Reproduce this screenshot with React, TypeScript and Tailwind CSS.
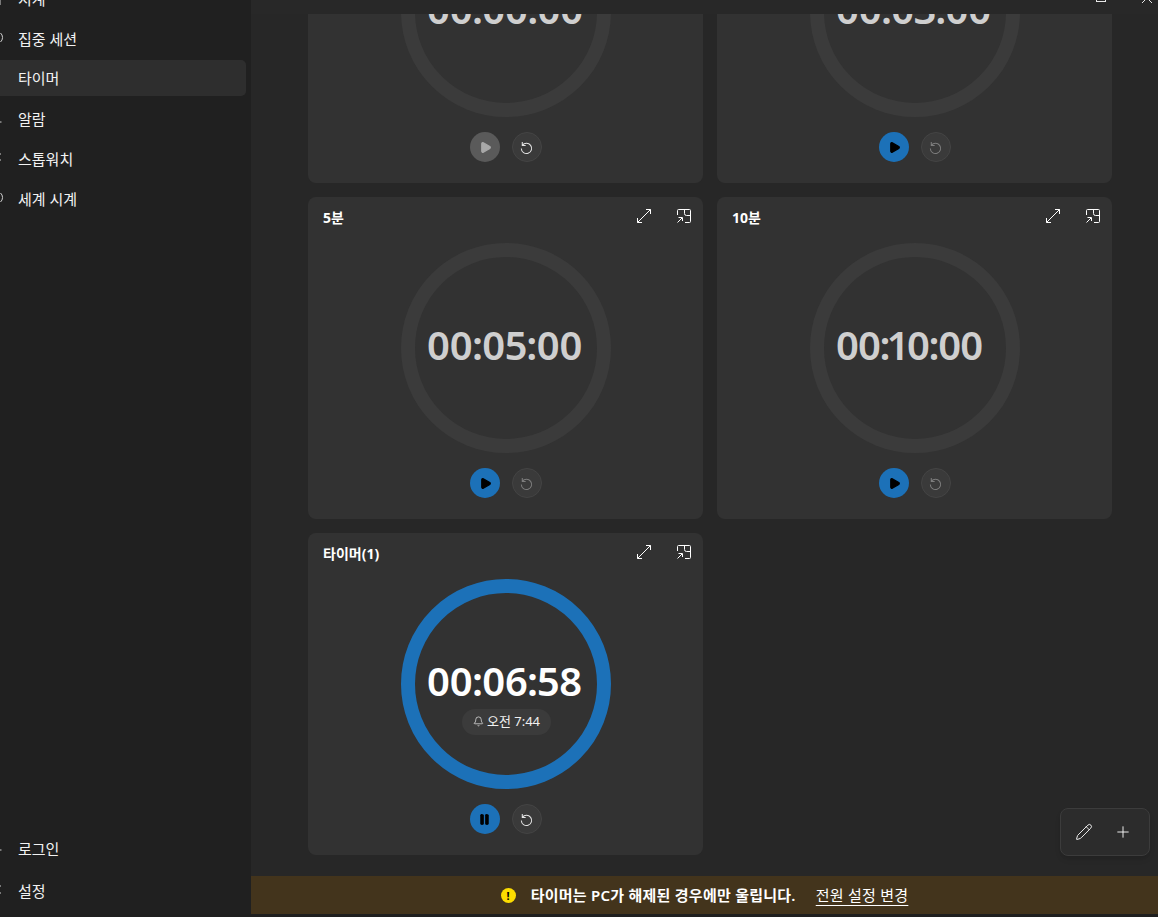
import { Bell, Pause, Pencil, Play, Plus } from "lucide-react";

const font = "font-['Noto_Sans','Noto_Sans_CJK_KR',sans-serif]";

function ExpandIcon() {
  return (
    <svg width="16" height="16" viewBox="0 0 16 16" fill="none" stroke="#ffffff" strokeWidth="1">
      <path d="M1.5 10v4.5H6M14.5 6V1.5H10M1.5 14.5l13-13" />
    </svg>
  );
}

function MiniIcon() {
  return (
    <svg width="16" height="16" viewBox="0 0 16 16" fill="none" stroke="#ffffff" strokeWidth="1">
      <path d="M1.5 7V2.5a1 1 0 0 1 1-1h11a1 1 0 0 1 1 1v11a1 1 0 0 1-1 1H9M8.5 1.5v4a2 2 0 0 0 2 2h4M1.5 14.5 6 10M2.5 9.5H6.5V13" />
    </svg>
  );
}

function ResetIcon({ className }: { className: string }) {
  return (
    <svg className={className} width="15" height="15" viewBox="0 0 16 16" fill="none" stroke="currentColor" strokeWidth="1.1">
      <path d="M3.5 2v3.8h3.6M3.5 5.8A5.5 5.5 0 1 1 2.5 9" />
    </svg>
  );
}

function TimerCard({
  title,
  time,
  state,
  narrow,
}: {
  title: string;
  time: string;
  state: "idle" | "running" | "paused";
  narrow?: boolean;
}) {
  const running = state === "running";
  const paused = state === "paused";
  return (
    <div className="relative h-[322px] rounded-lg bg-[#323232] flex flex-col items-center">
      <div className="w-full h-[46px] pl-[15px] pr-[11px] flex justify-between">
        <span className="mt-[11px] text-[14px] leading-[20px] font-bold text-white">{title}</span>
        <div className="mt-[11px] flex gap-[24px] h-[16px]">
          <ExpandIcon />
          <MiniIcon />
        </div>
      </div>
      <div
        className={`w-[210px] h-[210px] shrink-0 rounded-full border-[14px] flex flex-col items-center justify-center ${
          running ? "border-[#1c71b8]" : "border-[#3b3b3b]"
        }`}
      >
        <div
          className={`w-[153px] -ml-[5px] text-[40px] leading-[50px] font-semibold whitespace-nowrap proportional-nums ${
            narrow ? "tracking-[-1.8px]" : "tracking-[-1.15px]"
          } ${running ? "text-white mt-[22px]" : "text-[#cfcfcf] mb-[6px]"}`}
        >
          {time}
        </div>
        {running && (
          <div className="mt-[3px] ml-[2px] h-[26px] w-[89px] rounded-full bg-[#3b3b3b] flex items-center justify-center gap-[3px] text-[13px] text-[#f0f0f0]">
            <Bell size={11} strokeWidth={1.5} />
            <span>오전 7:44</span>
          </div>
        )}
      </div>
      <div className="mt-[15px] flex gap-[12px]">
        <div
          className={`w-[30px] h-[30px] rounded-full flex items-center justify-center ${
            paused ? "bg-[#5a5a5a]" : "bg-[#1c71b8]"
          }`}
        >
          {running ? (
            <Pause size={13} fill="#000" stroke="#000" strokeWidth={1.5} />
          ) : (
            <Play
              size={13}
              className="ml-[1px]"
              fill={paused ? "#a8a8a8" : "#000"}
              stroke={paused ? "#a8a8a8" : "#000"}
            />
          )}
        </div>
        <div className="w-[30px] h-[30px] rounded-full bg-[#3a3a3a] border border-[#444444] flex items-center justify-center">
          <ResetIcon className={running || paused ? "text-[#e4e4e4]" : "text-[#7d7d7d]"} />
        </div>
      </div>
    </div>
  );
}

// the nav icons are nearly all cut off by the left edge of the window
function NavItem({ label, active, edge }: { label: string; active?: boolean; edge?: string }) {
  return (
    <div
      className={`relative h-[36px] mb-[4px] w-[246px] rounded-r-[5px] pl-[18px] flex items-center text-[15px] text-[#f2f2f2] ${
        active ? "bg-[#2e2e2e]" : "pt-[2px]"
      }`}
    >
      {edge && (
        <svg className="absolute left-0 top-[11px]" width="4" height="14" viewBox="0 0 4 14" fill="none" stroke="#cfcfcf">
          <path d={edge} />
        </svg>
      )}
      {label}
    </div>
  );
}

export default function App() {
  return (
    <div className={`w-[1158px] h-[917px] overflow-hidden flex flex-col bg-[#1f1f1f] ${font}`}>
      <div className="flex h-[914px]">
        <aside className="w-[251px] shrink-0 bg-[#202020] flex flex-col justify-between">
          <div className="-mt-[20px]">
            <NavItem label="시계" edge="M0 7v7" />
            <NavItem label="집중 세션" edge="M0.5 2A6 6 0 0 1 0.5 11" />
            <NavItem label="타이머" active />
            <NavItem label="알람" edge="M0 11h1.5" />
            <NavItem label="스톱워치" edge="M0 3h1M0 9h1" />
            <NavItem label="세계 시계" edge="M0.5 2A6 6 0 0 1 0.5 11" />
          </div>
          <div className="pb-[2px]">
            <div className="mb-[6px]">
              <NavItem label="로그인" edge="M0 9h1.5" />
            </div>
            <NavItem label="설정" edge="M0 3h1M0 10h1" />
          </div>
        </aside>

        <main className="relative flex-1 min-w-0 flex flex-col bg-[#272727]">
          {/* title bar, window buttons are cut off at the top */}
          <div className="relative z-10 h-[14px] shrink-0 bg-[#282828] overflow-hidden">
            <div className="absolute right-[52px] -top-[8px] w-[10px] h-[10px] border border-[#e8e8e8]" />
            <svg
              className="absolute right-[6px] -top-[7px]"
              width="10"
              height="10"
              viewBox="0 0 10 10"
              stroke="#e8e8e8"
            >
              <path d="M0 0l10 10M10 0L0 10" />
            </svg>
          </div>

          <div className="flex-1 min-h-0 overflow-hidden pl-[57px] pr-[46px]">
            <div className="-mt-[153px] grid grid-cols-2 gap-[14px]">
              <TimerCard title="1분" time="00:00:00" state="paused" />
              <TimerCard title="3분" time="00:03:00" state="idle" />
              <TimerCard title="5분" time="00:05:00" state="idle" />
              <TimerCard title="10분" time="00:10:00" state="idle" narrow />
              <TimerCard title="타이머(1)" time="00:06:58" state="running" />
            </div>
          </div>

          <div className="absolute right-[8px] bottom-[58px] w-[90px] h-[48px] rounded-lg bg-[#2c2c2c] border border-[#3c3c3c] shadow-md flex items-center justify-center gap-[21px] pr-[3px] text-white">
            <Pencil size={18} strokeWidth={1.2} />
            <Plus size={18} strokeWidth={1.2} />
          </div>

          <div className="h-[38px] shrink-0 bg-[#43341c] flex items-center justify-center text-[15px] tracking-[0.25px] text-white">
            <span className="w-[15px] h-[15px] rounded-full bg-[#fcdc00] text-black text-[11px] font-bold leading-[15px] text-center">
              !
            </span>
            <span className="ml-[15px] font-semibold">타이머는 PC가 해제된 경우에만 울립니다.</span>
            <span className="ml-[20px] underline underline-offset-4">전원 설정 변경</span>
          </div>
        </main>
      </div>
    </div>
  );
}
